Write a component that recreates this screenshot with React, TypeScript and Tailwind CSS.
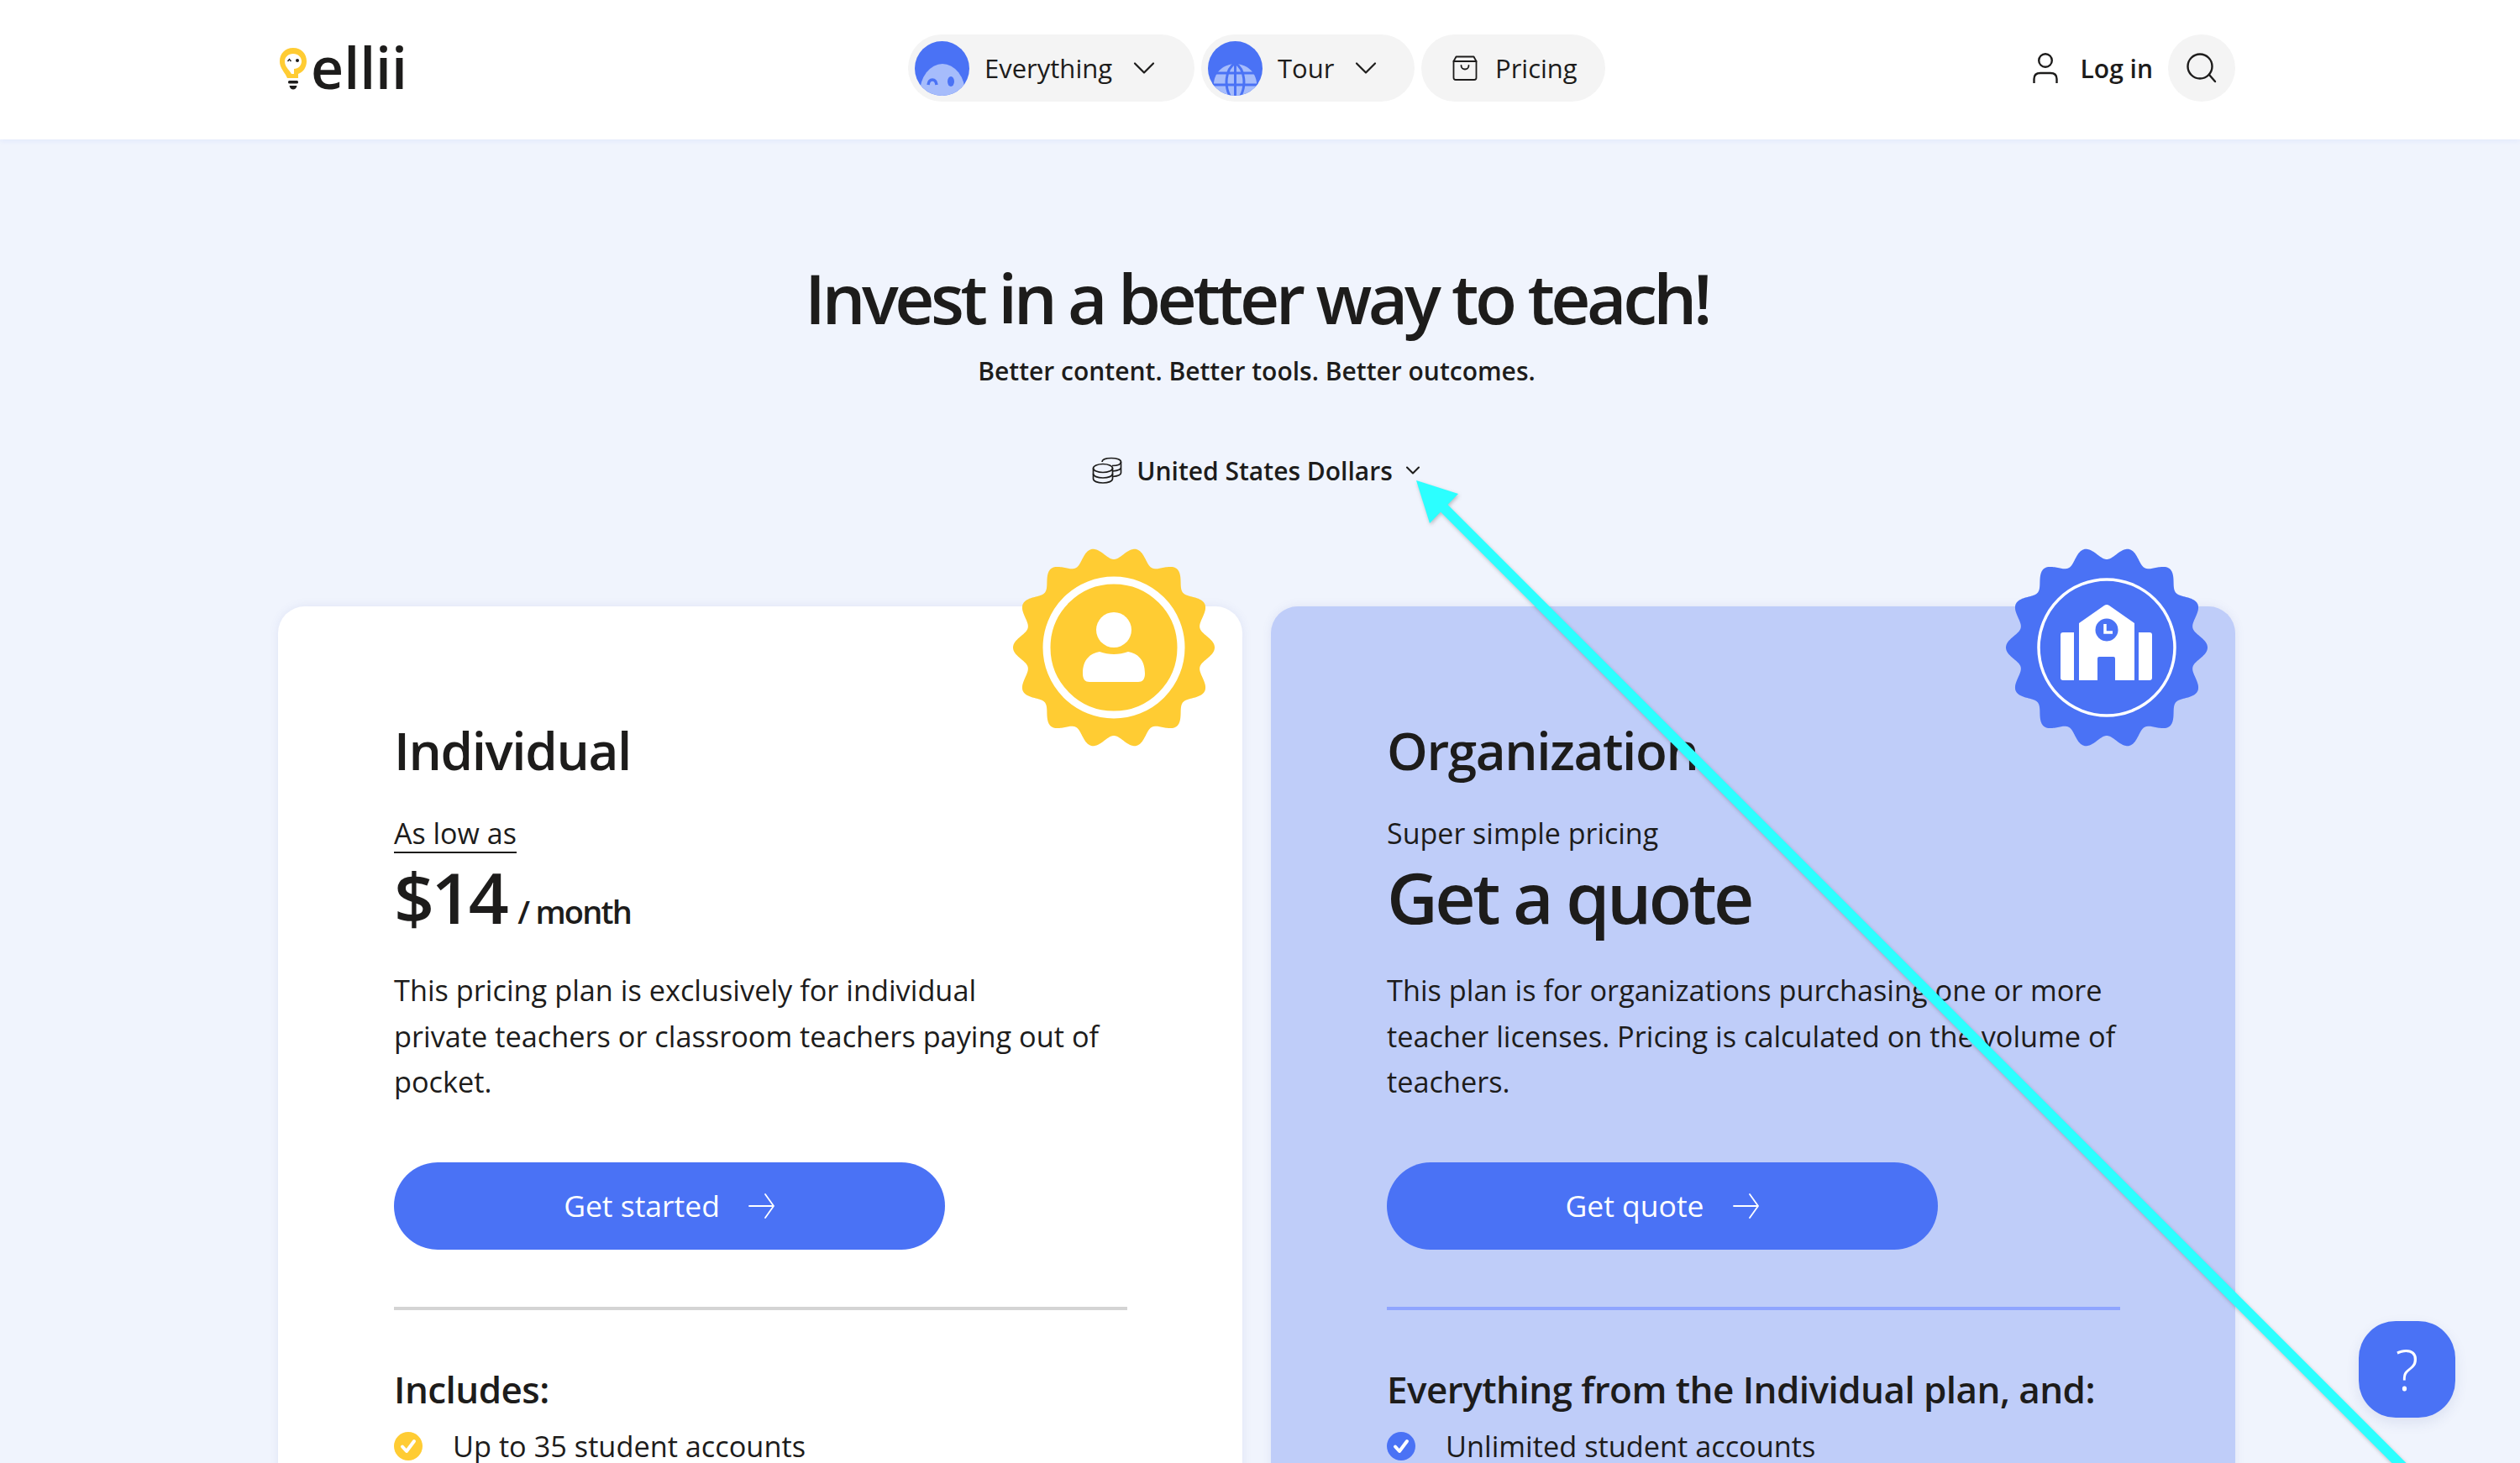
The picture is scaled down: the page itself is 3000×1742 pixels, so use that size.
import { ChevronDown } from 'lucide-react';

const font = { fontFamily: '"Open Sans", sans-serif' };

function wavyPath(outer: number, inner: number, points: number) {
  const mid = (outer + inner) / 2;
  const amp = (outer - inner) / 2;
  const parts: string[] = [];
  for (let i = 0; i < 720; i++) {
    const a = (i / 720) * Math.PI * 2;
    const r = mid + amp * Math.cos(points * a);
    parts.push(`${(r * Math.cos(a)).toFixed(2)} ${(r * Math.sin(a)).toFixed(2)}`);
  }
  return 'M' + parts.join('L') + 'Z';
}

function PersonBadge() {
  return (
    <svg viewBox="-125 -125 250 250" className="absolute right-[28px] top-[-76px] h-[250px] w-[250px]">
      <path d={wavyPath(120, 105, 14)} fill="#ffcc33" />
      <circle r="80" fill="none" stroke="#fff" strokeWidth="9" />
      <circle cx="0" cy="-21" r="21" fill="#fff" />
      <path d="M-37 31C-37 14 -28 7 -17 5C-6 9 6 9 17 5C28 7 37 14 37 31C37 38 34 41 29 41H-29C-34 41 -37 38 -37 31Z" fill="#fff" />
    </svg>
  );
}

function SchoolBadge() {
  return (
    <svg viewBox="-125 -125 250 250" className="absolute right-[28px] top-[-76px] h-[250px] w-[250px]">
      <path d={wavyPath(120, 105, 14)} fill="#4a72f5" />
      <circle r="81" fill="none" stroke="#fff" strokeWidth="3.5" />
      <path d="M-55 -15Q-55 -18 -52 -18H-39V39H-52Q-55 39 -55 36Z" fill="#fff" />
      <path d="M54 -15Q54 -18 51 -18H38V39H51Q54 39 54 36Z" fill="#fff" />
      <path d="M-33 39V-29L-3 -50Q0 -52 3 -50L33 -29V39H10V13Q10 11 8 11H-9Q-11 11 -11 13V39Z" fill="#fff" />
      <circle cx="0" cy="-21" r="13.5" fill="#4a72f5" />
      <path d="M-2 -28V-18H7" fill="none" stroke="#fff" strokeWidth="3.5" />
    </svg>
  );
}

function CheckDot({ color }: { color: string }) {
  return (
    <svg viewBox="0 0 34 34" className="h-[34px] w-[34px] shrink-0">
      <circle cx="17" cy="17" r="17" fill={color} />
      <path d="M10 17.5L15 23L24 11" fill="none" stroke="#fff" strokeWidth="4" strokeLinecap="round" strokeLinejoin="round" />
    </svg>
  );
}

function Logo() {
  return (
    <div className="flex items-center gap-[3px]">
      <svg viewBox="0 0 36 52" className="h-[52px] w-[36px]">
        <path d="M18 2C8 2 2 9 2 18C2 25 6 29 9 34L11 38H24V33C30 31 34 25 34 18C34 9 28 2 18 2Z" fill="#ffcc33" />
        <path d="M18 9C12 9 8 13 8 18C8 23 11 26 14 30L16 33H19V27C24 27 28 23 28 18C28 13 24 9 18 9Z" fill="#fff" />
        <circle cx="23" cy="17" r="2" fill="#1d1c1b" />
        <path d="M11.5 18L13.5 15.5L15.5 18" fill="none" stroke="#1d1c1b" strokeWidth="1.4" />
        <rect x="12" y="41" width="12" height="3.5" rx="1.5" fill="#1d1c1b" />
        <path d="M13.5 47H22.5C22 50 20 51.5 18 51.5C16 51.5 14 50 13.5 47Z" fill="#1d1c1b" />
      </svg>
      <span className="mt-[-3px] text-[68px] font-semibold leading-none text-[#1d1c1b]">ellii</span>
    </div>
  );
}

function NavAvatar({ kind }: { kind: 'face' | 'globe' }) {
  return (
    <svg viewBox="0 0 65 65" className="h-[65px] w-[65px] shrink-0">
      <defs>
        <clipPath id={`clip-${kind}`}>
          <circle cx="32.5" cy="32.5" r="32.5" />
        </clipPath>
      </defs>
      <circle cx="32.5" cy="32.5" r="32.5" fill="#4a72f5" />
      <g clipPath={`url(#clip-${kind})`}>
        {kind === 'face' ? (
          <>
            <ellipse cx="33" cy="62" rx="27" ry="35" fill="#a6bcfb" />
            <path d="M16 52C17 44 25 44 26 52" fill="none" stroke="#4a72f5" strokeWidth="3.5" />
            <ellipse cx="43" cy="48" rx="4" ry="6" fill="#4a72f5" />
          </>
        ) : (
          <>
            <path d="M7 65V50C8 36 20 27 32.5 27C45 27 57 36 58 50V65Z" fill="#a6bcfb" />
            <path d="M4 38H61M2 52H63M32.5 24V65M32.5 26C20 34 20 54 26 65M32.5 26C45 34 45 54 39 65" fill="none" stroke="#4a72f5" strokeWidth="3" />
          </>
        )}
      </g>
    </svg>
  );
}

function BagIcon() {
  return (
    <svg viewBox="0 0 30 30" className="h-[30px] w-[30px]" fill="none" stroke="#1d1c1b" strokeWidth="1.8" strokeLinejoin="round" strokeLinecap="round">
      <path d="M4.5 1.5H25.5L28.5 7V26.5Q28.5 29 26 29H4Q1.5 29 1.5 26.5V7Z" />
      <path d="M1.5 7H28.5" />
      <path d="M10.5 12C10.5 18 19.5 18 19.5 12" />
    </svg>
  );
}

function UserIcon() {
  return (
    <svg viewBox="0 0 30 36" className="h-[36px] w-[30px]" fill="none" stroke="#1d1c1b" strokeWidth="2.4">
      <circle cx="15" cy="9" r="7.8" />
      <path d="M1.5 36V31C1.5 26 5 24 9 24H21C25 24 28.5 26 28.5 31V36" />
    </svg>
  );
}

function SearchIcon() {
  return (
    <svg viewBox="0 0 36 36" className="h-[36px] w-[36px]" fill="none" stroke="#1d1c1b" strokeWidth="2.4" strokeLinecap="round">
      <circle cx="16" cy="16" r="14.5" />
      <path d="M27 26L34 34" />
    </svg>
  );
}

function CoinsIcon() {
  return (
    <svg viewBox="0 0 36 32" className="h-[32px] w-[36px]" fill="none" stroke="#1d1c1b" strokeWidth="1.7">
      <ellipse cx="13" cy="13.5" rx="11.5" ry="5" />
      <path d="M1.5 13.5V26C1.5 29 6.5 31 13 31C19.5 31 24.5 29 24.5 26V13.5" />
      <path d="M1.5 20C1.5 23 6.5 25 13 25C19.5 25 24.5 23 24.5 20" />
      <path d="M12 6C12 3 16 1.5 23 1.5C30 1.5 34.5 3.5 34.5 6C34.5 9 30 10.5 24 10.5" />
      <path d="M34.5 6V19C34.5 21.5 30 23 24.5 23.5M34.5 12.5C34.5 15 30 16.5 24.5 17" />
    </svg>
  );
}

function ThinArrow() {
  return (
    <svg viewBox="0 0 32 32" className="h-[32px] w-[32px]" fill="none" stroke="#fff" strokeWidth="1.8" strokeLinecap="round">
      <path d="M1 16H30M20 2L30 16L20 30" />
    </svg>
  );
}

function Header() {
  return (
    <header className="h-[166px] w-full bg-white shadow-[0_2px_6px_rgba(74,114,245,0.08)]">
      <div className="ml-[331px] grid h-full w-[2330px] grid-cols-[1fr_auto_1fr] items-center pb-[4px]">
        <Logo />
        <nav className="flex items-center gap-[8px] text-[31px] text-[#1d1c1b]">
          <div className="flex h-[80px] w-[341px] items-center rounded-full bg-[#f4f4f4] pl-[8px]">
            <NavAvatar kind="face" />
            <span className="ml-[18px]">Everything</span>
            <ChevronDown className="ml-[16px] h-[44px] w-[44px]" strokeWidth={1.2} />
          </div>
          <div className="flex h-[80px] w-[254px] items-center rounded-full bg-[#f4f4f4] pl-[8px]">
            <NavAvatar kind="globe" />
            <span className="ml-[18px]">Tour</span>
            <ChevronDown className="ml-[16px] h-[44px] w-[44px]" strokeWidth={1.2} />
          </div>
          <div className="flex h-[80px] w-[219px] items-center rounded-full bg-[#f4f4f4] pl-[37px]">
            <BagIcon />
            <span className="ml-[21px]">Pricing</span>
          </div>
        </nav>
        <div className="flex items-center justify-end text-[#1d1c1b]">
          <UserIcon />
          <span className="ml-[27px] text-[30px] font-semibold">Log in</span>
          <div className="ml-[18px] flex h-[80px] w-[80px] items-center justify-center rounded-full bg-[#f4f4f4]">
            <SearchIcon />
          </div>
        </div>
      </div>
    </header>
  );
}

type PlanProps = {
  title: string;
  lead: string;
  price: string;
  per?: string;
  body: string[];
  cta: string;
  includes: string;
  first: string;
  dot: string;
  card: string;
  rule: string;
  leadRule?: boolean;
  badge: React.ReactNode;
};

function Plan({ title, lead, price, per, body, cta, includes, first, dot, card, rule, leadRule, badge }: PlanProps) {
  return (
    <section className={`relative h-[1100px] w-[1148px] rounded-[32px] px-[138px] pt-[138px] shadow-[0_0_12px_rgba(74,90,180,0.1)] ${card}`}>
      {badge}
      <h2 className="text-[62px] font-semibold leading-[66px] tracking-[-1.4px]">{title}</h2>
      <div className="mt-[44px] h-[44px]">
        <span className={`inline-block text-[34px] leading-[44px] ${leadRule ? 'border-b-2 border-[#1d1c1b]' : ''}`}>{lead}</span>
      </div>
      <div className="mt-[4px] flex items-baseline gap-[14px]">
        <span className="text-[84px] font-semibold leading-[100px] tracking-[-3.6px]">{price}</span>
        {per && <span className="text-[38px] font-semibold tracking-[-1.8px]">{per}</span>}
      </div>
      <div className="mt-[34px] whitespace-nowrap text-[34.3px] leading-[54.6px]">
        {body.map((line) => (
          <p key={line}>{line}</p>
        ))}
      </div>
      <button className="mt-[68px] flex h-[104px] w-[656px] items-center justify-center gap-[34px] rounded-full bg-[#4a72f5] text-[35.5px] text-white">
        {cta}
        <ThinArrow />
      </button>
      <div className={`mt-[68px] h-[4px] w-[873px] ${rule}`} />
      <h3 className="mt-[64px] whitespace-nowrap text-[44px] font-semibold leading-[60px] tracking-[-0.55px]">{includes}</h3>
      <div className="mt-[14px] flex items-center gap-[36px] text-[34.3px] leading-[48px]">
        <CheckDot color={dot} />
        <span>{first}</span>
      </div>
    </section>
  );
}

export default function App() {
  return (
    <div style={font} className="relative h-[1742px] w-[3000px] overflow-hidden bg-[#f0f4fd] text-[#1d1c1b]">
      <Header />
      <main className="flex w-[2992px] flex-col items-center">
        <h1 className="mt-[146px] text-[82px] font-semibold leading-[84px] tracking-[-4.5px]">Invest in a better way to teach!</h1>
        <p className="mt-[24px] text-[30px] font-semibold leading-[44px]">Better content. Better tools. Better outcomes.</p>
        <div className="mt-[74px] flex h-[44px] items-center pl-[4px]">
          <CoinsIcon />
          <span className="ml-[17px] text-[30px] font-semibold">United States Dollars</span>
          <ChevronDown className="ml-[10px] h-[28px] w-[28px]" strokeWidth={1.8} />
        </div>
        <div className="mt-[140px] flex gap-[34px]">
          <Plan
            title="Individual"
            lead="As low as"
            leadRule
            price="$14"
            per="/ month"
            body={[
              'This pricing plan is exclusively for individual',
              'private teachers or classroom teachers paying out of',
              'pocket.',
            ]}
            cta="Get started"
            includes="Includes:"
            first="Up to 35 student accounts"
            dot="#ffcc33"
            card="bg-white"
            rule="bg-[#d4d4d4]"
            badge={<PersonBadge />}
          />
          <Plan
            title="Organization"
            lead="Super simple pricing"
            price="Get a quote"
            body={[
              'This plan is for organizations purchasing one or more',
              'teacher licenses. Pricing is calculated on the volume of',
              'teachers.',
            ]}
            cta="Get quote"
            includes="Everything from the Individual plan, and:"
            first="Unlimited student accounts"
            dot="#4a72f5"
            card="bg-[#bfcdf9]"
            rule="bg-[#8fa5ff]"
            badge={<SchoolBadge />}
          />
        </div>
      </main>

      <div className="absolute left-[2808px] top-[1573px] flex h-[115px] w-[115px] items-center justify-center rounded-[44px] bg-[#4a72f5] text-[66px] font-light text-white shadow-[0_6px_16px_rgba(40,60,140,0.1)]">
        ?
      </div>

      {/* annotation arrow laid over the screenshot */}
      <svg viewBox="0 0 3000 1742" className="pointer-events-none absolute inset-0 h-[1742px] w-[3000px] drop-shadow-[1px_2px_2px_rgba(60,60,60,0.3)]">
        <path d="M1712 598L2870 1756" stroke="#2cffff" strokeWidth="12" />
        <path d="M1686 572L1736 588L1702 623Z" fill="#2cffff" />
      </svg>
    </div>
  );
}
